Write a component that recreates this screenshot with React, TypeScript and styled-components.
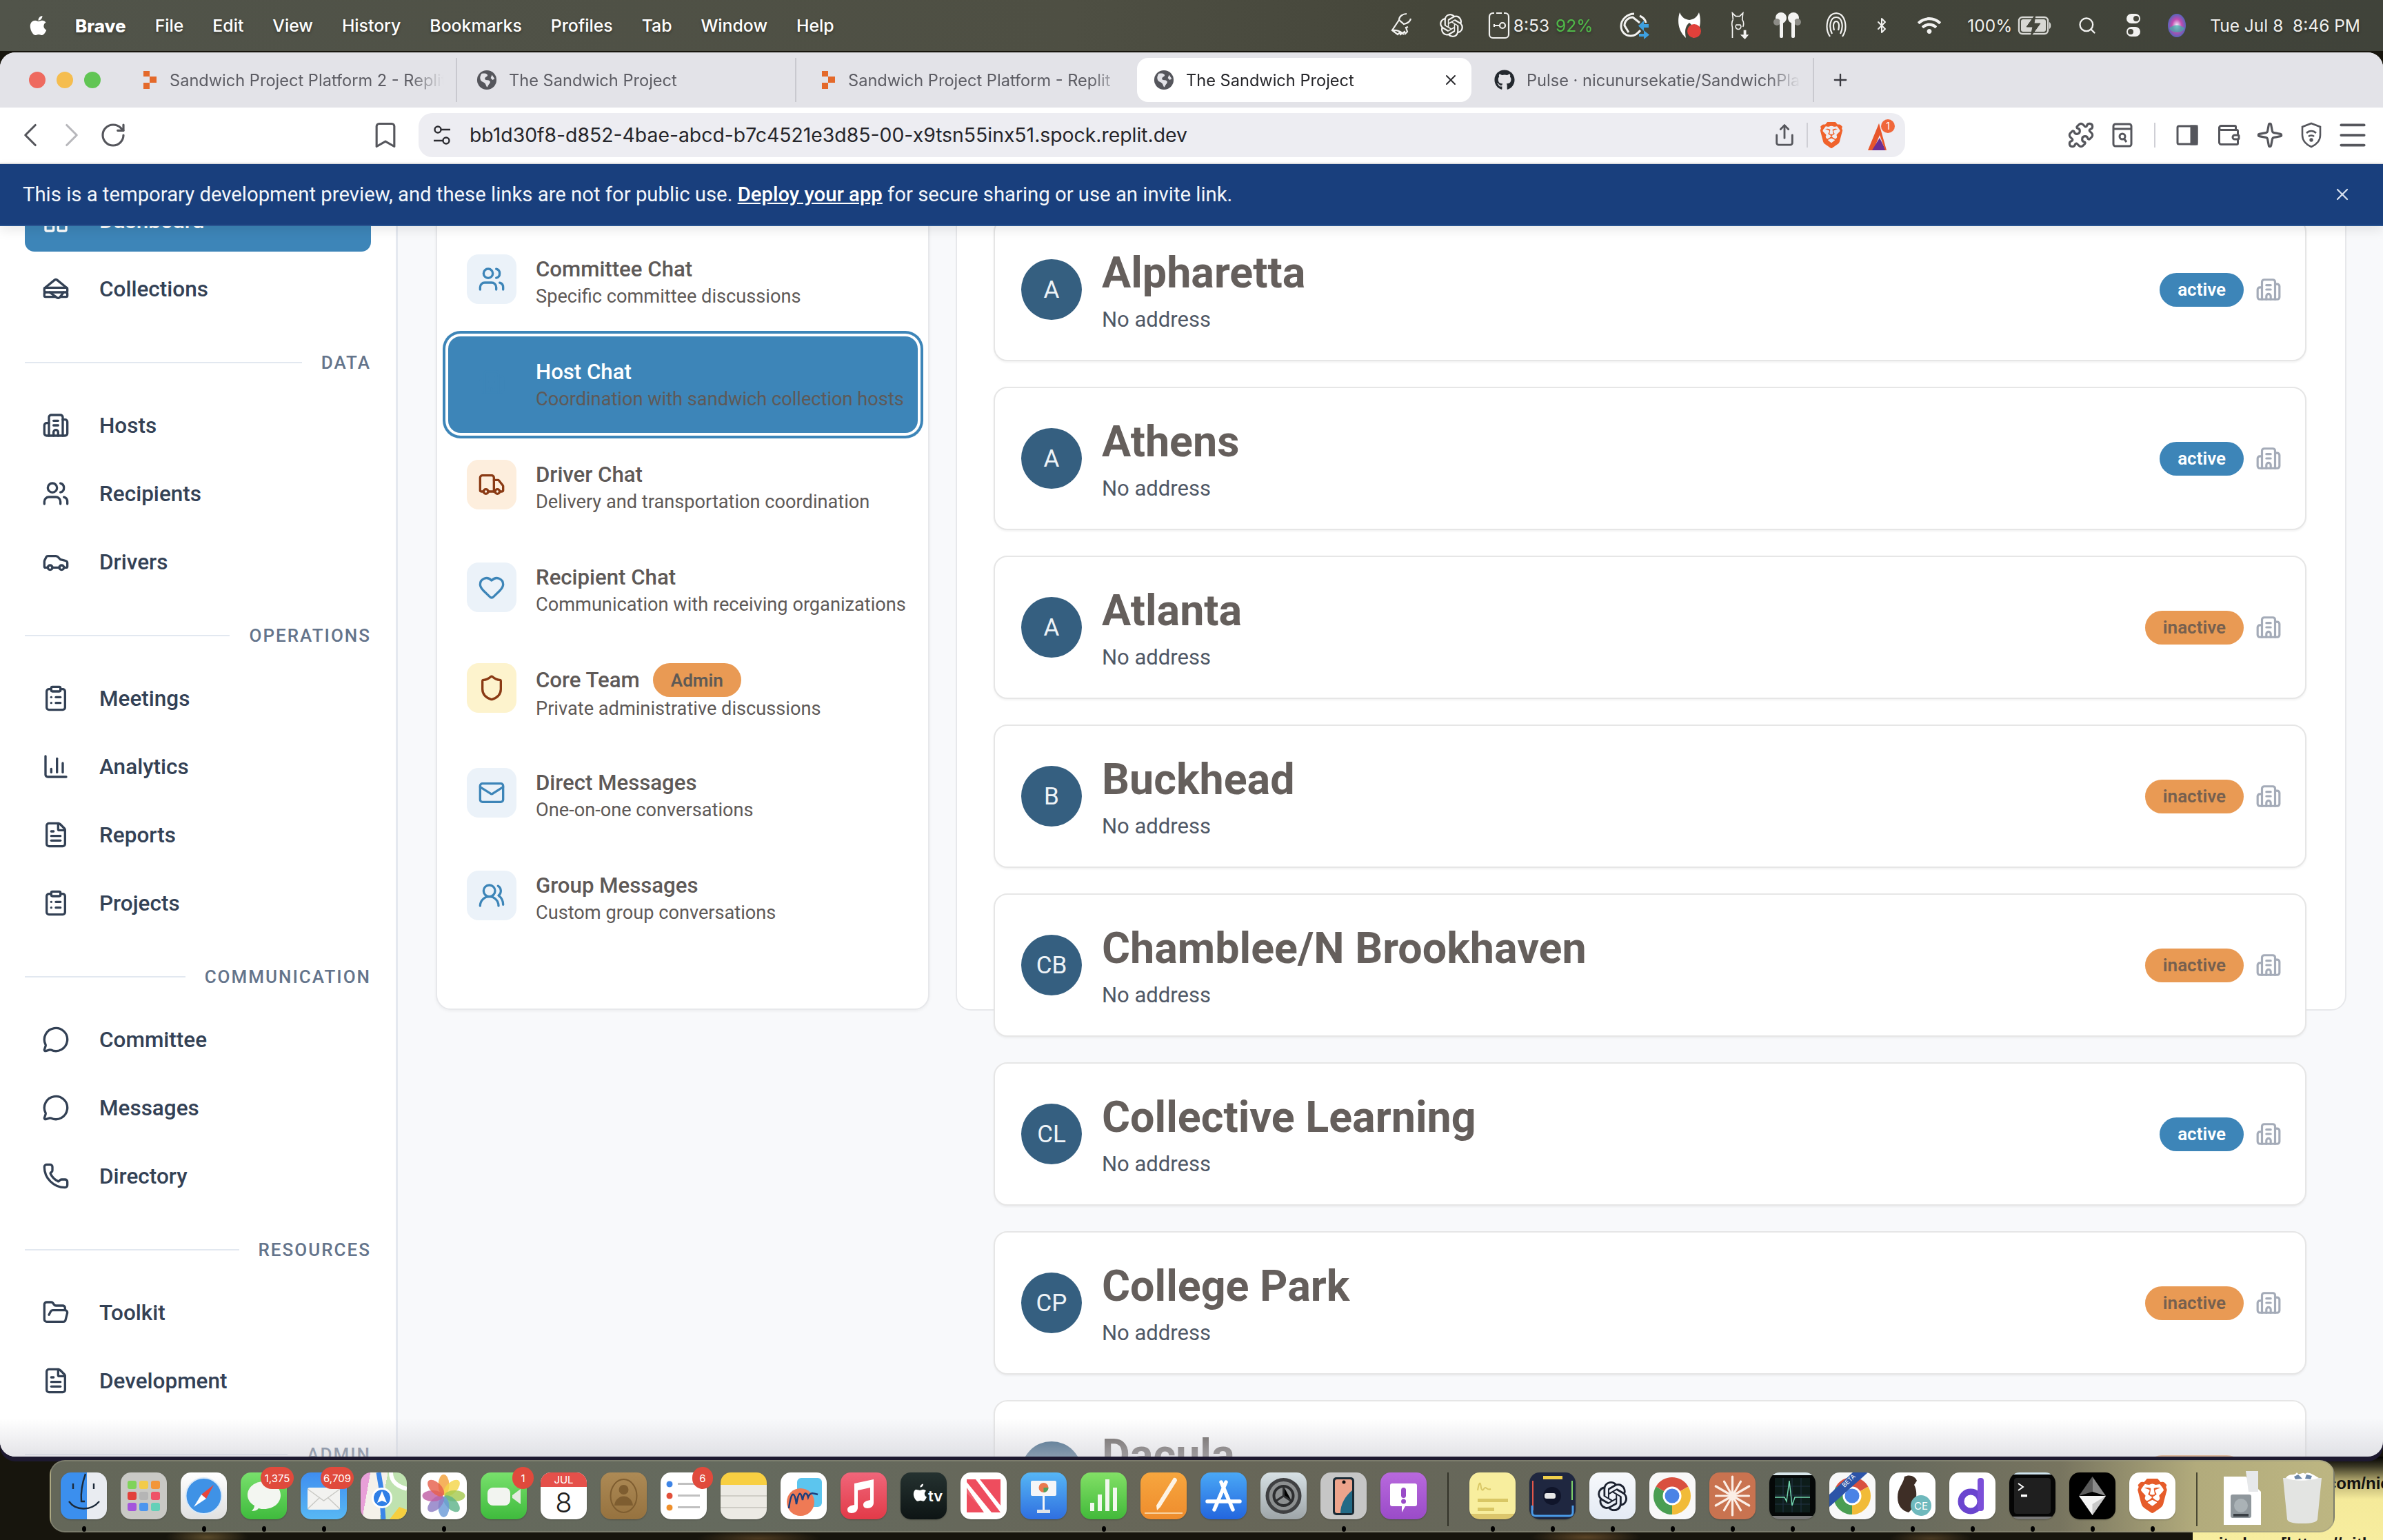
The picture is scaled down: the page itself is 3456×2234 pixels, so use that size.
import React from "react";
import styled, { createGlobalStyle } from "styled-components";
import {
  BarChart3, Bluetooth, Bookmark, Building2, Car, ChevronLeft, ChevronRight, ClipboardList,
  FileText, FolderOpen, Heart, LayoutDashboard, Mail, Menu, MessageCircle, Phone, Plus, Puzzle,
  RotateCw, Sandwich, Search, Share, Shield, Sparkle, Truck, Users, UsersRound, Wallet, X,
} from "lucide-react";
import { FaApple, FaGithub, FaWifi } from "react-icons/fa";
import { SiBrave, SiOpenai } from "react-icons/si";

const GlobalStyle = createGlobalStyle`
  html, body {
    margin: 0;
    width: 3456px;
    height: 2234px;
    overflow: hidden;
    background: #000;
    font-family: Roboto, "Liberation Sans", sans-serif;
  }
  * { box-sizing: border-box; }
`;

const Desktop = styled.div`
  position: relative;
  width: 3456px;
  height: 2234px;
  overflow: hidden;
  background:
    radial-gradient(60px 14px at 300px 2230px, #5a4a2a, transparent),
    radial-gradient(90px 12px at 1100px 2232px, #4d3a20, transparent),
    radial-gradient(80px 12px at 2300px 2230px, #5b4426, transparent),
    radial-gradient(60px 12px at 2800px 2232px, #4a3a22, transparent),
    #17150d;
`;

/* the note window that sits behind the dock at the lower right */
const NoteWindow = styled.div`
  position: absolute;
  left: 3180px;
  top: 2113px;
  right: 0;
  bottom: 0;
  overflow: hidden;
  background: linear-gradient(180deg, #000 0, #3a3724 14px, #b8ae72 36px, #f5ea9a 62px, #f7ed9f 100%);
  color: #111;
  font: 600 24px "Liberation Sans", sans-serif;
  white-space: nowrap;
`;

const NoteLine = styled.div<{ $top: number; $left: number }>`
  position: absolute;
  top: ${(p) => p.$top}px;
  left: ${(p) => p.$left}px;
`;

/* ---------- macOS menu bar ---------- */

const MenuBar = styled.div`
  height: 74px;
  display: flex;
  align-items: center;
  padding-left: 42px;
  background: linear-gradient(90deg, #51544a 0%, #4e4f43 45%, #45463a 60%, #40433a 100%);
  color: #fff;
  font: 500 24.8px Inter, sans-serif;
  text-shadow: 0 2px 4px rgba(0, 0, 0, 0.35);
`;

const AppleMark = styled.div`
  width: 27px;
  height: 32px;
  margin-right: 40px;
  display: flex;
  svg { width: 27px; height: 32px; }
`;

const MenuItems = styled.div`
  display: flex;
  gap: 42px;
`;

const MenuName = styled.span<{ $bold?: boolean }>`
  font-weight: ${(p) => (p.$bold ? 800 : 500)};
  font-size: ${(p) => (p.$bold ? 26 : 24.8)}px;
`;

const Tray = styled.div`
  margin-left: auto;
  display: flex;
  align-items: center;
  padding-right: 33px;
`;

const TrayIcon = styled.div<{ $w: number; $ml: number }>`
  width: ${(p) => p.$w}px;
  margin-left: ${(p) => p.$ml}px;
  height: 40px;
  display: flex;
  align-items: center;
  justify-content: center;
  color: #f2f2f0;
  svg { width: 100%; height: 100%; display: block; }
`;

const TrayText = styled.span<{ $ml: number }>`
  margin-left: ${(p) => p.$ml}px;
  font: 400 24.5px Inter, sans-serif;
  white-space: nowrap;
  color: #f0f0ee;
`;

const Green = styled.span`
  color: #50ba49;
  margin-left: 9px;
`;

/* ---------- browser window ---------- */

const BrowserWindow = styled.div`
  position: relative;
  z-index: 1;
  height: 2037px;
  margin-top: 2px;
  display: flex;
  flex-direction: column;
  overflow: hidden;
  border-radius: 22px;
  background: #f8f9fb;
  box-shadow: 0 7px 0 #1d1930;
`;

const TabStrip = styled.div`
  height: 80px;
  flex: none;
  display: flex;
  align-items: center;
  background: #e3e3e8;
  font: 400 23.6px Inter, sans-serif;
  color: #5d5d64;
`;

const Lights = styled.div`
  width: 171px;
  flex: none;
  display: flex;
  gap: 16px;
  padding-left: 42px;
`;

const Light = styled.span<{ $c: string }>`
  width: 24px;
  height: 24px;
  border-radius: 50%;
  background: ${(p) => p.$c};
`;

const Tab = styled.div<{ $w: number; $pad: number; $active?: boolean; $sep?: boolean }>`
  position: relative;
  width: ${(p) => p.$w}px;
  height: 64px;
  flex: none;
  display: flex;
  align-items: center;
  gap: 17px;
  padding: 0 18px 0 ${(p) => p.$pad}px;
  border-radius: ${(p) => (p.$active ? "16px" : "0")};
  background: ${(p) => (p.$active ? "#fff" : "transparent")};
  color: ${(p) => (p.$active ? "#26262a" : "#5d5d64")};
  ${(p) => (p.$sep ? "border-right: 2px solid #c9c9cf;" : "")}
  svg { flex: none; }
`;

const TabTitle = styled.span`
  flex: 1;
  min-width: 0;
  overflow: hidden;
  white-space: nowrap;
  -webkit-mask-image: linear-gradient(90deg, #000 88%, transparent);
  mask-image: linear-gradient(90deg, #000 88%, transparent);
`;

const NewTab = styled.div`
  margin-left: 24px;
  display: flex;
  color: #3a3a40;
`;

const Toolbar = styled.div`
  height: 82px;
  flex: none;
  display: flex;
  align-items: center;
  background: #fff;
  border-bottom: 2px solid #e4e4e6;
`;

const NavGroup = styled.div`
  width: 607px;
  flex: none;
  display: flex;
  align-items: center;
  gap: 24px;
  padding-left: 26px;
`;

const ToolSlot = styled.div<{ $c?: string; $push?: boolean }>`
  width: 36px;
  height: 36px;
  flex: none;
  display: flex;
  align-items: center;
  justify-content: center;
  color: ${(p) => p.$c || "#55565c"};
  ${(p) => (p.$push ? "margin-left: auto; margin-right: 30px;" : "")}
  svg { flex: none; }
`;

const UrlBar = styled.div`
  width: 2156px;
  height: 64px;
  flex: none;
  display: flex;
  align-items: center;
  padding: 0 15px 0 20px;
  border-radius: 20px;
  background: #ededf2;
  font: 400 28.35px Inter, sans-serif;
  color: #25252a;
`;

const UrlText = styled.span`
  margin-left: 26px;
`;

const UrlTools = styled.div`
  margin-left: auto;
  display: flex;
  align-items: center;
  gap: 15px;
`;

const ThinRule = styled.span<{ $h: number }>`
  width: 2px;
  height: ${(p) => p.$h}px;
  background: #cfcfd5;
`;

const AlertMark = styled.div`
  margin-left: 16px;
  display: flex;
`;

const ToolsRight = styled.div`
  flex: 1;
  display: flex;
  align-items: center;
  justify-content: flex-end;
  gap: 24px;
  padding-right: 26px;
`;

const ToolRule = styled(ThinRule)`
  margin: 0 4px;
`;

const Banner = styled.div`
  position: relative;
  z-index: 3;
  height: 90px;
  flex: none;
  display: flex;
  align-items: center;
  padding: 0 45px 0 33px;
  background: #193f7d;
  border-bottom: 2px solid #28538f;
  box-shadow: 0 6px 16px rgba(0, 0, 0, 0.09);
  color: #f4f7fb;
  font: 400 29.3px Roboto, sans-serif;
`;

const BannerLink = styled.a`
  color: #fff;
  font-weight: 500;
  text-decoration: underline;
`;

const BannerClose = styled.div`
  margin-left: auto;
  display: flex;
  color: #d5dfee;
`;

const Body = styled.div`
  position: relative;
  flex: 1;
  min-height: 0;
  display: flex;
  align-items: flex-start;
  overflow: hidden;
  &::after {
    content: "";
    position: absolute;
    z-index: 2;
    left: 0;
    right: 0;
    bottom: 0;
    height: 56px;
    background: linear-gradient(180deg, rgba(210, 210, 216, 0), rgba(205, 205, 212, 0.55));
  }
`;

/* ---------- sidebar ---------- */

const Sidebar = styled.nav`
  width: 577px;
  height: 100%;
  flex: none;
  display: flex;
  flex-direction: column;
  padding: 0 36px;
  background: #fff;
  border-right: 3px solid #e5e9f0;
`;

const NavRows = styled.div<{ $first?: boolean }>`
  display: flex;
  flex-direction: column;
  gap: 9px;
  flex: none;
  ${(p) => (p.$first ? "margin-top: -53px;" : "")}
`;

const NavRow = styled.div<{ $active?: boolean }>`
  height: 90px;
  flex: none;
  display: flex;
  align-items: center;
  gap: 43px;
  padding-left: 25px;
  border-radius: 14px;
  background: ${(p) => (p.$active ? "#3d85b8" : "transparent")};
  color: ${(p) => (p.$active ? "#fff" : "#334155")};
  font-size: 31.5px;
  font-weight: 500;
  svg { width: 40px; height: 40px; flex: none; }
`;

const SectionHead = styled.div`
  height: 30px;
  flex: none;
  margin: 47px 0 31px;
  display: flex;
  align-items: center;
  gap: 28px;
  font-size: 26px;
  font-weight: 500;
  letter-spacing: 2px;
  color: #64748b;
`;

const SectionRule = styled.span`
  flex: 1;
  height: 2px;
  background: #e2e8f0;
`;

/* ---------- chat list ---------- */

const ChatPanel = styled.section`
  width: 716px;
  height: 1177px;
  flex: none;
  margin: -40px 0 0 55px;
  padding: 47px 15px 0 16px;
  display: flex;
  flex-direction: column;
  gap: 9px;
  background: #fff;
  border: 2px solid #e7e8eb;
  border-radius: 22px;
  box-shadow: 0 2px 4px rgba(0, 0, 0, 0.05);
`;

const ChatRow = styled.div<{ $active?: boolean; $pad?: number }>`
  height: 140px;
  flex: none;
  display: flex;
  gap: 28px;
  padding: ${(p) => p.$pad ?? 32}px 0 0 27px;
  border-radius: 18px;
  ${(p) =>
    p.$active
      ? `background: #3d85b8;
         margin: 2px 0 -2px;
         box-shadow: 0 0 0 4px #fff, 0 0 0 8px #3d85b8;`
      : ""}
`;

const ChatIcon = styled.div<{ $bg: string; $fg: string }>`
  width: 72px;
  height: 72px;
  flex: none;
  display: flex;
  align-items: center;
  justify-content: center;
  border-radius: 17px;
  background: ${(p) => p.$bg};
  color: ${(p) => p.$fg};
  svg { width: 40px; height: 40px; }
`;

const ChatText = styled.div`
  min-width: 0;
  display: flex;
  flex-direction: column;
`;

const ChatTitle = styled.div<{ $active?: boolean }>`
  display: flex;
  align-items: center;
  gap: 19px;
  min-height: 44px;
  font-size: 31.2px;
  font-weight: 500;
  line-height: 44px;
  color: ${(p) => (p.$active ? "#fff" : "#5e5957")};
`;

const AdminPill = styled.span`
  width: 128px;
  height: 49px;
  display: flex;
  align-items: center;
  justify-content: center;
  border-radius: 25px;
  background: #e99a54;
  color: #5f5a55;
  font-size: 26px;
  font-weight: 600;
`;

const ChatDesc = styled.div`
  font-size: 27.2px;
  line-height: 34px;
  font-weight: 400;
  color: #5e5957;
  white-space: nowrap;
`;

/* ---------- hosts list ---------- */

const HostPanel = styled.section`
  width: 2017px;
  height: 1178px;
  flex: none;
  margin: -40px 0 0 38px;
  padding: 26px 0 0 53px;
  display: flex;
  flex-direction: column;
  gap: 37px;
  background: #fff;
  border: 2px solid #e7e8eb;
  border-radius: 22px;
`;

const HostCard = styled.article`
  width: 1904px;
  height: 208px;
  flex: none;
  display: flex;
  align-items: center;
  padding: 0 34px 0 38px;
  background: #fff;
  border: 2px solid #e6e6e6;
  border-radius: 20px;
  box-shadow: 0 2px 3px rgba(0, 0, 0, 0.05);
`;

const Avatar = styled.div`
  width: 88px;
  height: 88px;
  flex: none;
  display: flex;
  align-items: center;
  justify-content: center;
  border-radius: 50%;
  background: #355f80;
  color: #eef3f7;
  font-size: 35px;
`;

const HostInfo = styled.div`
  flex: 1;
  margin-left: 29px;
  padding-top: 4px;
`;

const HostName = styled.h3`
  margin: 0;
  font-size: 62.8px;
  line-height: 72px;
  font-weight: 700;
  color: #655f5c;
`;

const HostAddress = styled.p`
  margin: 12px 0 0;
  font-size: 31px;
  line-height: 40px;
  color: #4f5866;
`;

const StatusPill = styled.span<{ $active: boolean }>`
  height: 49px;
  padding: 0 26px;
  display: flex;
  align-items: center;
  border-radius: 25px;
  background: ${(p) => (p.$active ? "#3d85b8" : "#e99a54")};
  color: ${(p) => (p.$active ? "#fff" : "#76604f")};
  font-size: 26px;
  font-weight: 600;
`;

const CardIcon = styled.div`
  margin-left: 17px;
  display: flex;
  color: #a4abb8;
  svg { width: 38px; height: 38px; }
`;

/* ---------- dock ---------- */

const Dock = styled.div`
  position: relative;
  z-index: 2;
  width: 3314px;
  height: 105px;
  margin: 5px 0 0 72px;
  display: flex;
  align-items: flex-start;
  gap: 20px;
  padding: 16px 0 0 14px;
  border-radius: 22px;
  border: 2px solid rgba(150, 150, 130, 0.45);
  background: linear-gradient(90deg, #646759 0%, #656a5e 30%, #676658 50%, #66695d 80%, #77745f 88%, #b2ab7c 94%, #bdb682 100%);
`;

const DockItem = styled.div<{ $running?: boolean; $w?: number }>`
  position: relative;
  width: ${(p) => p.$w ?? 67}px;
  height: 68px;
  flex: none;
  svg { display: block; }
  ${(p) =>
    p.$running
      ? `&::after {
           content: "";
           position: absolute;
           left: 50%;
           top: 78px;
           width: 6px;
           height: 8px;
           margin-left: -3px;
           border-radius: 50%;
           background: #000;
         }`
      : ""}
`;

const Tile = styled.div<{ $bg: string }>`
  width: 100%;
  height: 100%;
  border-radius: 15px;
  overflow: hidden;
  background: ${(p) => p.$bg};
  box-shadow: 0 1px 2px rgba(0, 0, 0, 0.25);
`;

const DockBadge = styled.span<{ $w: number }>`
  position: absolute;
  top: -8px;
  right: -${(p) => (p.$w > 30 ? 10 : 9)}px;
  width: ${(p) => p.$w}px;
  height: 32px;
  display: flex;
  align-items: center;
  justify-content: center;
  border-radius: 16px;
  background: #e04a3c;
  color: #fff;
  font: 400 15px Inter, sans-serif;
`;

const DockRule = styled.span`
  width: 2px;
  height: 78px;
  flex: none;
  margin: 0 10px;
  background: rgba(30, 30, 20, 0.7);
`;

const ReplitMark = () => (
  <svg width="22" height="28" viewBox="0 0 22 28">
    <path fill="#e4692a" d="M1 1h9v8H1zM10 9h10v9H10zM1 18h9v9H1z" />
  </svg>
);

const GlobeMark = ({ size = 30 }: { size?: number }) => (
  <svg width={size} height={size} viewBox="0 0 32 32">
    <circle cx="16" cy="16" r="15" fill="#55565c" />
    <path fill="#e3e3e8" d="M8 6c4 0 7-1 9 2 1 3-4 3-4 6s6 1 8 4c1 3-3 5-4 9-2 0-2-4-4-6s-6-2-7-6c-1-3 0-6 2-9zM24 8l4 6-3 2-3-3z" />
  </svg>
);

const Sliders = () => (
  <svg width="28" height="32" viewBox="0 0 28 32" fill="none" stroke="#2b2b30" strokeWidth="2.4">
    <circle cx="8" cy="8" r="4.5" /><path d="M13 8h13M2 24h13" /><circle cx="20" cy="24" r="4.5" />
  </svg>
);

const TriangleMark = () => (
  <svg width="42" height="46" viewBox="0 0 42 46">
    <path fill="#e8562b" d="M19 6 3 45h8l9-22z" />
    <path fill="#6b2f93" d="M9 45 20 27l9 18z" />
    <path fill="#e8562b" d="M19 6l11 39h-2L19 20z" />
    <circle cx="32" cy="10" r="10" fill="#f0673a" />
    <text x="32" y="15" fontSize="14" fill="#fff" textAnchor="middle" fontFamily="Inter">1</text>
  </svg>
);

const ReaderMark = () => (
  <svg width="30" height="36" viewBox="0 0 30 36" fill="none" stroke="#55565c" strokeWidth="3">
    <rect x="2" y="2" width="26" height="32" rx="3" /><path d="M2 9h26" /><circle cx="15" cy="20" r="4" /><path d="m18 24 3 4" />
  </svg>
);

const SidePanelMark = () => (
  <svg width="32" height="32" viewBox="0 0 32 32" fill="none" stroke="#55565c" strokeWidth="3">
    <rect x="2" y="3" width="28" height="26" rx="2" /><path fill="#55565c" d="M22 3h8v26h-8z" />
  </svg>
);

const VpnMark = () => (
  <svg width="30" height="38" viewBox="0 0 30 38" fill="none" stroke="#55565c" strokeWidth="2.6">
    <path d="M15 2 28 7v12c0 8-6 14-13 17C8 33 2 27 2 19V7z" /><path d="M8 16c4-4 10-4 14 0M11 21c2-2 6-2 8 0" /><circle cx="15" cy="26" r="1.4" />
  </svg>
);

const BroomMark = () => (
  <svg viewBox="0 0 34 40" fill="none" stroke="currentColor" strokeWidth="2.2">
    <path d="M24 3c-6 0-11 4-11 9l7 6c5-1 9-3 10-8M13 12 3 27l8 6 3-3 1 3 6-4 1 3 3-3-2-6 3-1M3 27c7-1 12 1 17 6" />
  </svg>
);

const KeyMark = () => (
  <svg viewBox="0 0 32 40" fill="none" stroke="currentColor" strokeWidth="2.2">
    <path d="M9 2H7a5 5 0 0 0-5 5v26a5 5 0 0 0 5 5h18a5 5 0 0 0 5-5V7a5 5 0 0 0-5-5h-2M12 2h8" />
    <circle cx="21" cy="20" r="4" /><path d="M9 18v4M9 20h8" />
  </svg>
);

const CloudMark = () => (
  <svg viewBox="0 0 46 40" fill="none">
    <path stroke="#f2f2f0" strokeWidth="3" d="M22 3C12 3 3 11 3 21c0 9 7 14 14 14s10-4 14-8M14 30 8 20c0-7 6-12 12-12l10 8M30 6c5 2 8 6 9 10" />
    <path fill="#3ea0e0" d="M36 13v5h7v5h-7v5l-8-7.500zM36 27v5h-7v4h7v4l8-6.500z" />
  </svg>
);

const MalwareMark = () => (
  <svg viewBox="0 0 34 40">
    <path fill="#fff" d="M3 1C-1 14 1 28 12 38c-2-10-1-17 5-22 6 5 7 12 5 22C33 28 35 14 31 1c-3 7-7 10-14 11C10 11 6 8 3 1z" />
    <circle cx="24" cy="28" r="10" fill="#e0403a" />
  </svg>
);

const LlamaMark = () => (
  <svg viewBox="0 0 30 42" fill="none" stroke="currentColor" strokeWidth="1.8">
    <path d="M6 12 5 2l5 5h6l5-5-1 10c3 4 2 9 1 11M6 12c-3 4-2 8-1 12v16M11 20a4 4 0 1 0 6 0z" />
    <path strokeWidth="4" d="M24 28v9" /><path fill="currentColor" stroke="none" d="m17 35 7 7 6-7z" />
  </svg>
);

const PodsMark = () => (
  <svg viewBox="0 0 40 40">
    <circle cx="11" cy="9" r="8" fill="#f4f4f2" /><circle cx="29" cy="9" r="8" fill="#f4f4f2" />
    <circle cx="5" cy="15" r="5" fill="#8c8c86" /><circle cx="35" cy="15" r="5" fill="#8c8c86" />
    <rect x="9" y="12" width="5" height="26" rx="2" fill="#f4f4f2" /><rect x="26" y="12" width="5" height="26" rx="2" fill="#f4f4f2" />
  </svg>
);

const DropMark = () => (
  <svg viewBox="0 0 32 40" fill="none" stroke="currentColor" strokeWidth="2.2">
    <path d="M7 36C-1 24 2 3 16 2c14 1 17 22 9 34M10 32C5 22 7 8 16 8s11 14 6 24M13 27c-2-7-1-13 3-13s5 6 3 13" />
  </svg>
);

const BatteryMark = () => (
  <svg viewBox="0 0 50 40" fill="none">
    <rect x="2" y="8" width="42" height="24" rx="5" stroke="#d8d8d4" strokeWidth="2.4" />
    <rect x="5" y="11" width="36" height="18" rx="3" fill="#d8d8d4" />
    <path fill="#45463c" stroke="#45463c" d="M26 4 13 22h9l-3 14 14-19h-9z" />
    <path fill="#d8d8d4" d="M46 15c3 1 3 9 0 10z" />
  </svg>
);

const SwitchMark = () => (
  <svg viewBox="0 0 22 40">
    <rect x="1" y="3" width="20" height="14" rx="7" fill="#f2f2f0" /><circle cx="15" cy="10" r="4" fill="#45463c" />
    <rect x="1" y="22" width="20" height="14" rx="7" fill="#f2f2f0" /><circle cx="7" cy="29" r="4" fill="#45463c" />
  </svg>
);

const SiriMark = () => (
  <svg viewBox="0 0 28 40">
    <defs>
      <radialGradient id="siri" cx="50%" cy="50%" r="60%">
        <stop offset="0" stopColor="#f3f3ff" /><stop offset=".45" stopColor="#c04bb0" /><stop offset="1" stopColor="#2b6fbf" />
      </radialGradient>
    </defs>
    <ellipse cx="14" cy="20" rx="13" ry="17" fill="url(#siri)" />
    <path d="M3 24c6-6 16-6 22 0-4 8-17 8-22 0z" fill="#3bb3a9" opacity=".7" />
  </svg>
);

const stdIcon = (children: React.ReactNode) => (
  <svg width="100%" height="100%" viewBox="0 0 67 68">{children}</svg>
);

const chromeWheel = (
  <>
    <path fill="#d9503f" d="M33 34 9.600 20.500A27 27 0 0 1 56.400 20.500Z" />
    <path fill="#f1bb38" d="M33 34 56.400 20.500A27 27 0 0 1 33 61Z" />
    <path fill="#4a9e52" d="M33 34 33 61A27 27 0 0 1 9.600 20.500Z" />
    <circle cx="33" cy="34" r="13.500" fill="#fff" /><circle cx="33" cy="34" r="10.500" fill="#4a83e6" />
  </>
);

const petals = ["#f3a13a", "#f4d64a", "#a5c94f", "#5fb38a", "#6b9bd8", "#8c7cc4", "#c05fa5", "#e6604c"];

type DockApp = {
  key: string;
  bg: string;
  art?: React.ReactNode;
  badge?: string;
  badgeW?: number;
  running?: boolean;
  w?: number;
};

const dockLeft: DockApp[] = [
  { key: "finder", bg: "linear-gradient(90deg,#3b8fee 0 56%,#e9ecf1 56%)", running: true, art: stdIcon(
    <g fill="none" stroke="#1c2a3a" strokeWidth="2.4">
      <path d="M36 2c-5 14-7 28-6 40h5" /><path d="M18 16v8M48 16v8" /><path d="M12 42c10 14 32 14 44 0" />
    </g>) },
  { key: "launchpad", bg: "#c9c9c5", art: stdIcon(
    <>
      {["#7fd35a", "#f2cb4a", "#f2963a", "#e2403a", "#b5b5b5", "#ee5268", "#a455dc", "#4d96ee", "#64d0b8"].map((c, i) => (
        <rect key={c} x={10 + (i % 3) * 17} y={12 + Math.floor(i / 3) * 16} width="13" height="12" rx="3" fill={c} />
      ))}
    </>) },
  { key: "safari", bg: "linear-gradient(#fff,#e0e0e0)", running: true, art: stdIcon(
    <>
      <circle cx="33.500" cy="34" r="26" fill="#3f92e6" stroke="#d8e8f8" strokeWidth="2" />
      <path fill="#e9463c" d="M48 18 37 38l-7-6z" /><path fill="#fff" d="M19 50l11-18 7 6z" />
    </>) },
  { key: "messages", bg: "linear-gradient(#78e06c,#3fbb3d)", running: true, badge: "1,375", badgeW: 48, art: stdIcon(
    <path fill="#f3f6f1" d="M34 13c14 0 24 9 24 20s-10 20-24 20c-3 0-5 0-8-1-2 3-6 4-10 4 2-2 4-5 4-8-6-3-10-9-10-15 0-11 10-20 24-20z" />) },
  { key: "mail", bg: "linear-gradient(#3f8ef0 0,#58b8f4 100%)", running: true, badge: "6,709", badgeW: 48, art: stdIcon(
    <>
      <rect x="10" y="22" width="47" height="32" rx="3" fill="#f2f2f0" />
      <path fill="none" stroke="#c9c9c5" strokeWidth="1.500" d="m10 24 23.500 17L57 24M10 53l17-16M57 53 40 37" />
    </>) },
  { key: "maps", bg: "linear-gradient(100deg,#e8a0d8 0 18%,#f4f1ea 18% 50%,#bfe2b0 50%)", art: stdIcon(
    <>
      <path stroke="#3a86e8" strokeWidth="7" d="M26 0 31 30M31 40l2 28" fill="none" />
      <path fill="none" stroke="#fff" strokeWidth="6" d="M44 0c0 14 10 20 23 24" />
      <path fill="#f6cf3f" d="M42 68l14-18 11 4v14z" />
      <circle cx="31" cy="37" r="15" fill="#fff" /><circle cx="31" cy="37" r="12" fill="#2f7fe6" />
      <path fill="#fff" d="m31 27 7 17-7-3-7 3z" />
    </>) },
  { key: "photos", bg: "#fff", running: true, art: stdIcon(
    <>
      {petals.map((c, i) => (
        <ellipse key={c} cx="33.500" cy="18" rx="8" ry="15" fill={c} opacity=".82" transform={`rotate(${i * 45} 33.500 34)`} />
      ))}
    </>) },
  { key: "facetime", bg: "linear-gradient(#78e06c,#3fbb3d)", badge: "1", badgeW: 31, art: stdIcon(
    <>
      <rect x="10" y="22" width="33" height="26" rx="8" fill="#f2f4f0" /><path fill="#e4eae0" d="M46 33l12-9v22l-12-9z" />
    </>) },
  { key: "calendar", bg: "#fff", art: stdIcon(
    <>
      <rect width="67" height="21" fill="#e5504a" />
      <text x="33.500" y="16" textAnchor="middle" fontSize="15" fill="#fff" fontFamily="Inter">JUL</text>
      <text x="33.500" y="58" textAnchor="middle" fontSize="40" fill="#1e1e1e" fontFamily="Inter" fontWeight="300">8</text>
    </>) },
  { key: "contacts", bg: "linear-gradient(#ad8a55,#96723f)", art: stdIcon(
    <>
      <ellipse cx="33.500" cy="34" rx="19" ry="24" fill="none" stroke="#7e5d30" strokeWidth="2" />
      <circle cx="33.500" cy="25" r="7" fill="#7e5d30" /><path fill="#7e5d30" d="M20 48c2-18 25-18 27 0z" />
    </>) },
  { key: "reminders", bg: "#fff", badge: "6", badgeW: 30, art: stdIcon(
    <>
      {["#3d84e6", "#e2503a", "#ef8f2a"].map((c, i) => (
        <g key={c}>
          <circle cx="13" cy={17 + i * 17} r="5" fill={c} stroke="#fff" strokeWidth="1" />
          <rect x="25" y={15 + i * 17} width="32" height="3" fill="#c0c0c0" />
        </g>
      ))}
    </>) },
  { key: "notes", bg: "linear-gradient(#f8cf42 0 26%,#eceae4 26%)", art: stdIcon(
    <path stroke="#cfcdc6" strokeWidth="2" d="M0 34h67M0 51h67" />) },
  { key: "freeform", bg: "#fff", art: stdIcon(
    <>
      <rect x="24" y="8" width="36" height="42" rx="6" fill="#5cc5ee" /><circle cx="29" cy="43" r="20" fill="#ef7a55" />
      <path fill="none" stroke="#1d3f7c" strokeWidth="2.500" d="M12 52c4-30 9-22 11-6 3-18 6-20 9-6 2-12 6-12 8-4 3-8 8-6 14-4" />
    </>) },
  { key: "music", bg: "linear-gradient(#f0667a,#e23a48)", art: stdIcon(
    <path fill="#fff" d="M48 10v34c0 5-4 8-9 8s-6-3-6-5c0-4 4-6 10-7V22l-18 4v25c0 5-4 8-9 8s-6-3-6-5c0-4 4-6 10-7V16z" />) },
  { key: "tv", bg: "linear-gradient(#253230,#0d1414)", art: (
    <svg width="100%" height="100%" viewBox="0 0 67 68">
      <path fill="#fff" d="M23 25c2-.2 4 1 5 1s3-1.500 5-1.300c1.500 0 3 .8 4 2-3 2-3 7 1 9-1 2-3 6-5 6-1.500 0-2-1-4-1s-2.500 1-4 1c-3-.2-7-7-6-12 .5-3 2-5 4-5zM29 19c1-1.500 2.500-2.500 4-2.500 0 3-2 5-4.500 5 0-1 0-1.700.5-2.500z" />
      <text x="40" y="42" fontSize="22" fill="#fff" fontFamily="Inter" fontWeight="600">tv</text>
    </svg>) },
  { key: "news", bg: "#fff", art: stdIcon(
    <>
      <path fill="#ee4d5e" d="M9 10h13l36 48H45L9 14z" /><path fill="#ee4d5e" d="M28 10h30v38zM9 22l25 36H9z" />
      <path fill="#fff" d="M9 20 45 58h-9L9 30z" opacity=".15" />
    </>) },
  { key: "keynote", bg: "linear-gradient(#56b6f5,#2f6fe0)", art: stdIcon(
    <>
      <rect x="15" y="12" width="37" height="22" rx="2" fill="#f4f6f8" /><circle cx="33.500" cy="22" r="7" fill="#ea7a50" />
      <path fill="#4ea35d" d="M33.500 22h7a7 7 0 0 1-7 7z" />
      <rect x="32" y="34" width="3" height="22" fill="#f4f6f8" /><rect x="24" y="54" width="19" height="5" fill="#dfe3e8" />
    </>) },
  { key: "numbers", bg: "linear-gradient(#82e066,#42b93a)", running: true, art: stdIcon(
    <>
      {[[14, 44, 12], [25, 32, 24], [36, 10, 46], [47, 22, 34]].map(([x, y, h]) => (
        <rect key={x} x={x} y={y} width="6" height={h} fill="#f2f8ee" />
      ))}
    </>) },
  { key: "pages", bg: "linear-gradient(#f7a63e,#ee8c2d)", art: stdIcon(
    <>
      <path fill="#fdf3e4" d="M48 8c3-1 5 1 5 4L29 50l-5 5-1-7z" /><rect x="6" y="58" width="55" height="2" fill="#f9d3a2" />
    </>) },
  { key: "appstore", bg: "linear-gradient(#4aa8f6,#2366de)", art: stdIcon(
    <g stroke="#fff" strokeWidth="5.500" strokeLinecap="round" fill="none">
      <path d="M20 54 37 14M47 54 30 14M10 42h47" />
    </g>) },
  { key: "settings", bg: "linear-gradient(#d6e0e4,#9ea5a8)", art: stdIcon(
    <>
      <circle cx="33.500" cy="34" r="26" fill="#3f4042" /><circle cx="33.500" cy="34" r="21" fill="#8c8f90" />
      <circle cx="33.500" cy="34" r="14" fill="none" stroke="#2d2e30" strokeWidth="4" />
      <path stroke="#2d2e30" strokeWidth="3" d="M33.500 20v14l12 8M33.500 34l-12 8" />
    </>) },
  { key: "mirror", bg: "#c6c6c6", running: true, art: stdIcon(
    <>
      <rect x="18" y="7" width="31" height="55" rx="5" fill="#1a2a35" /><rect x="21" y="10" width="25" height="49" rx="3" fill="#eda48c" />
      <path fill="#236a86" d="M46 26C36 34 29 46 29 59h17z" /><circle cx="34" cy="14" r="2.500" fill="#111" />
    </>) },
  { key: "feedback", bg: "linear-gradient(#b869dd,#9a4bc8)", art: (
    <svg width="100%" height="100%" viewBox="0 0 67 68">
      <path fill="#fff" d="M17 16h33a3 3 0 0 1 3 3v27a3 3 0 0 1-3 3H36l-5 9v-9H17a3 3 0 0 1-3-3V19a3 3 0 0 1 3-3z" />
      <rect x="30" y="22" width="7" height="15" rx="3.500" fill="#9a4bc8" /><circle cx="33.500" cy="42" r="3.500" fill="#9a4bc8" />
    </svg>) },
];

const dockRight: DockApp[] = [
  { key: "stickies", bg: "linear-gradient(#f8ee9e 0 88%,#dcc66c 88%)", running: true, art: stdIcon(
    <g fill="#d9c765">
      <path fill="none" stroke="#d9c765" strokeWidth="2" d="M12 26c2-12 4-14 5-4 2 8 4 0 6 0s3 4 8 2" />
      <rect x="12" y="38" width="44" height="5" /><rect x="12" y="51" width="24" height="5" />
    </g>) },
  { key: "blackbox", bg: "#1f2740", running: true, art: stdIcon(
    <>
      <rect x="20" y="5" width="28" height="5" fill="#f0cf4c" />
      <path fill="none" stroke="#e2574a" strokeWidth="2" d="M5 55V12" /><path fill="none" stroke="#7fd36a" strokeWidth="2" d="M62 40V12" />
      <path fill="none" stroke="#4a9be8" strokeWidth="3" d="M4 48v10c0 3 2 5 5 5h49c3 0 5-2 5-5V48" />
      <circle cx="33" cy="34" r="13" fill="#10152a" /><rect x="22" y="30" width="16" height="8" rx="3" fill="#e6e6e6" />
    </>) },
  { key: "chatgpt", bg: "linear-gradient(#f7f9fc,#e4eaf4)", running: true, art: (
    <svg width="100%" height="100%" viewBox="0 0 67 68"><g transform="translate(12 13) scale(1.800)"><SiOpenai size={24} color="#1c2230" /></g></svg>) },
  { key: "chrome", bg: "#f8f8f8", running: true, art: stdIcon(chromeWheel) },
  { key: "claude", bg: "#c97350", running: true, art: stdIcon(
    <g stroke="#fbeee6" strokeWidth="3.200" strokeLinecap="round">
      {Array.from({ length: 12 }, (_, i) => (
        <line key={i} x1="33.500" y1="34" x2="33.500" y2={i % 2 ? 10 : 6} transform={`rotate(${i * 30} 33.500 34)`} />
      ))}
    </g>) },
  { key: "activity", bg: "linear-gradient(#d8e6ea 0 6%,#050808 6% 92%,#777 92%)", running: true, art: stdIcon(
    <>
      <rect x="8" y="8" width="51" height="50" fill="#0d1c1a" />
      <path stroke="#234" strokeWidth="1" d="M8 20h51M8 33h51M8 46h51M20 8v50M33 8v50M46 8v50" />
      <path fill="none" stroke="#74d8b0" strokeWidth="1.500" d="M8 36h14l3 6 4-30 4 36 4-12h22" />
    </>) },
  { key: "chromebeta", bg: "#f8f8f8", running: true, art: stdIcon(
    <>
      {chromeWheel}
      <path fill="#2c54a8" d="M0 32 34 0h22L0 50z" />
      <text x="0" y="0" fontSize="9" fill="#fff" fontFamily="Inter" transform="translate(22 22) rotate(-43)">BETA</text>
    </>) },
  { key: "beaver", bg: "#fff", running: true, art: stdIcon(
    <>
      <path fill="#3e2e26" d="M22 6c8-4 16 0 18 6l-4 6c6 10 4 30-8 40-8-2-16-8-16-22 0-14 8-18 10-30z" />
      <circle cx="46" cy="48" r="15" fill="#6fb9bd" />
      <text x="46" y="54" textAnchor="middle" fontSize="15" fill="#fff" fontFamily="Inter">CE</text>
    </>) },
  { key: "d", bg: "#fff", running: true, art: stdIcon(
    <>
      <circle cx="31" cy="42" r="14" fill="none" stroke="#6a45cf" strokeWidth="9" />
      <rect x="41" y="8" width="9" height="48" rx="4" fill="#7b4fd8" />
    </>) },
  { key: "terminal", bg: "linear-gradient(#cfe4ee 0 5%,#050505 5% 94%,#777 94%)", running: true, art: (
    <svg width="100%" height="100%" viewBox="0 0 67 68">
      <rect x="7" y="8" width="53" height="52" rx="4" fill="#1f1f1f" />
      <path fill="none" stroke="#fff" strokeWidth="2" d="m13 16 7 5-7 5" /><rect x="17" y="32" width="9" height="3.500" fill="#fff" />
    </svg>) },
  { key: "crystal", bg: "#000", running: true, art: stdIcon(
    <>
      <path fill="#5a5a5a" d="M33.500 6 14 34l19.500-6z" /><path fill="#8a8a8a" d="m33.500 6 19.500 28-19.500-6z" />
      <path fill="#f4f4f4" d="M14 34h39L33.500 62z" /><path fill="#c8c8c8" d="M33.500 46 53 34 33.500 62z" />
    </>) },
  { key: "bravedock", bg: "#fff", running: true, art: (
    <svg width="100%" height="100%" viewBox="0 0 67 68"><g transform="translate(8.500 9) scale(2.080)"><SiBrave size={24} color="#e65c2a" /></g></svg>) },
];

const DockTile = ({ app }: { app: DockApp }) => (
  <DockItem $running={app.running}>
    <Tile $bg={app.bg}>{app.art}</Tile>
    {app.badge && <DockBadge $w={app.badgeW || 30}>{app.badge}</DockBadge>}
  </DockItem>
);

const DownloadsStack = styled(DockItem)`
  height: 78px;
  margin-top: -2px;
  margin-left: 8px;
`;

const TrashCan = styled(DockItem)`
  height: 78px;
  margin-top: -4px;
  margin-left: 10px;
`;

type NavEntry = { label: string; icon: React.ReactNode; active?: boolean };
type NavGroupData = { title?: string; rows: NavEntry[] };

const navGroups: NavGroupData[] = [
  { rows: [
    { label: "Dashboard", icon: <LayoutDashboard />, active: true },
    { label: "Collections", icon: <Sandwich /> },
  ] },
  { title: "DATA", rows: [
    { label: "Hosts", icon: <Building2 /> },
    { label: "Recipients", icon: <Users /> },
    { label: "Drivers", icon: <Car /> },
  ] },
  { title: "OPERATIONS", rows: [
    { label: "Meetings", icon: <ClipboardList /> },
    { label: "Analytics", icon: <BarChart3 /> },
    { label: "Reports", icon: <FileText /> },
    { label: "Projects", icon: <ClipboardList /> },
  ] },
  { title: "COMMUNICATION", rows: [
    { label: "Committee", icon: <MessageCircle /> },
    { label: "Messages", icon: <MessageCircle /> },
    { label: "Directory", icon: <Phone /> },
  ] },
  { title: "RESOURCES", rows: [
    { label: "Toolkit", icon: <FolderOpen /> },
    { label: "Development", icon: <FileText /> },
  ] },
  { title: "ADMIN", rows: [] },
];

const BLUE_BG = "#ebf2f9";
const BLUE = "#3d85b8";
const BROWN = "#8a3a14";

const chats = [
  { title: "Committee Chat", desc: "Specific committee discussions", bg: BLUE_BG, fg: BLUE, icon: <Users /> },
  { title: "Host Chat", desc: "Coordination with sandwich collection hosts", bg: "transparent", fg: BLUE, icon: <Building2 />, active: true, pad: 30 },
  { title: "Driver Chat", desc: "Delivery and transportation coordination", bg: "#fdeedd", fg: BROWN, icon: <Truck /> },
  { title: "Recipient Chat", desc: "Communication with receiving organizations", bg: BLUE_BG, fg: BLUE, icon: <Heart /> },
  { title: "Core Team", desc: "Private administrative discussions", bg: "#fdf3cd", fg: BROWN, icon: <Shield />, admin: true, pad: 29 },
  { title: "Direct Messages", desc: "One-on-one conversations", bg: BLUE_BG, fg: BLUE, icon: <Mail /> },
  { title: "Group Messages", desc: "Custom group conversations", bg: BLUE_BG, fg: BLUE, icon: <UsersRound /> },
];

const hosts = [
  { initials: "A", name: "Alpharetta", active: true },
  { initials: "A", name: "Athens", active: true },
  { initials: "A", name: "Atlanta", active: false },
  { initials: "B", name: "Buckhead", active: false },
  { initials: "CB", name: "Chamblee/N Brookhaven", active: false },
  { initials: "CL", name: "Collective Learning", active: true },
  { initials: "CP", name: "College Park", active: false },
  { initials: "D", name: "Dacula", active: false },
];

const menuNames = ["File", "Edit", "View", "History", "Bookmarks", "Profiles", "Tab", "Window", "Help"];

export default function App() {
  return (
    <Desktop>
      <GlobalStyle />
      <NoteWindow>
        <NoteLine $top={25} $left={115}>github.com/nicunursekatie</NoteLine>
        <NoteLine $top={113} $left={23}>git clone [https://github.com</NoteLine>
      </NoteWindow>

      <MenuBar>
        <AppleMark><FaApple /></AppleMark>
        <MenuItems>
          <MenuName $bold>Brave</MenuName>
          {menuNames.map((m) => <MenuName key={m}>{m}</MenuName>)}
        </MenuItems>
        <Tray>
          <TrayIcon $w={34} $ml={0}><BroomMark /></TrayIcon>
          <TrayIcon $w={34} $ml={38}><SiOpenai /></TrayIcon>
          <TrayIcon $w={32} $ml={36}><KeyMark /></TrayIcon>
          <TrayText $ml={5}>8:53<Green>92%</Green></TrayText>
          <TrayIcon $w={46} $ml={38}><CloudMark /></TrayIcon>
          <TrayIcon $w={34} $ml={39}><MalwareMark /></TrayIcon>
          <TrayIcon $w={30} $ml={40}><LlamaMark /></TrayIcon>
          <TrayIcon $w={40} $ml={35}><PodsMark /></TrayIcon>
          <TrayIcon $w={32} $ml={35}><DropMark /></TrayIcon>
          <TrayIcon $w={24} $ml={38}><Bluetooth /></TrayIcon>
          <TrayIcon $w={34} $ml={40}><FaWifi /></TrayIcon>
          <TrayText $ml={38}>100%</TrayText>
          <TrayIcon $w={50} $ml={8}><BatteryMark /></TrayIcon>
          <TrayIcon $w={28} $ml={37}><Search /></TrayIcon>
          <TrayIcon $w={22} $ml={42}><SwitchMark /></TrayIcon>
          <TrayIcon $w={28} $ml={38}><SiriMark /></TrayIcon>
          <TrayText $ml={34}>Tue Jul 8&nbsp;&nbsp;8:46 PM</TrayText>
        </Tray>
      </MenuBar>

      <BrowserWindow>
        <TabStrip>
          <Lights>
            <Light $c="#ee6a5f" /><Light $c="#f5bd4f" /><Light $c="#61c554" />
          </Lights>
          <Tab $w={492} $pad={36} $sep><ReplitMark /><TabTitle>Sandwich Project Platform 2 - Replit</TabTitle></Tab>
          <Tab $w={492} $pad={28} $sep><GlobeMark /><TabTitle>The Sandwich Project</TabTitle></Tab>
          <Tab $w={494} $pad={36}><ReplitMark /><TabTitle>Sandwich Project Platform - Replit</TabTitle></Tab>
          <Tab $w={485} $pad={24} $active>
            <GlobeMark />
            <TabTitle>The Sandwich Project</TabTitle>
            <X size={24} color="#2a2a2e" />
          </Tab>
          <Tab $w={497} $pad={33} $sep><FaGithub size={30} color="#24292f" /><TabTitle>Pulse · nicunursekatie/SandwichPlatform</TabTitle></Tab>
          <NewTab><Plus size={28} /></NewTab>
        </TabStrip>

        <Toolbar>
          <NavGroup>
            <ToolSlot><ChevronLeft size={58} strokeWidth={1.3} /></ToolSlot>
            <ToolSlot $c="#b8b8bc"><ChevronRight size={58} strokeWidth={1.3} /></ToolSlot>
            <ToolSlot><RotateCw size={40} strokeWidth={1.9} /></ToolSlot>
            <ToolSlot $push><Bookmark size={44} strokeWidth={1.7} /></ToolSlot>
          </NavGroup>
          <UrlBar>
            <Sliders />
            <UrlText>bb1d30f8-d852-4bae-abcd-b7c4521e3d85-00-x9tsn55inx51.spock.replit.dev</UrlText>
            <UrlTools>
              <Share size={34} color="#55565c" strokeWidth={2} />
              <ThinRule $h={36} />
              <SiBrave size={38} color="#f0622b" />
              <AlertMark><TriangleMark /></AlertMark>
            </UrlTools>
          </UrlBar>
          <ToolsRight>
            <ToolSlot><Puzzle size={40} strokeWidth={1.9} /></ToolSlot>
            <ToolSlot><ReaderMark /></ToolSlot>
            <ToolRule $h={36} />
            <ToolSlot><SidePanelMark /></ToolSlot>
            <ToolSlot><Wallet size={36} strokeWidth={2} /></ToolSlot>
            <ToolSlot><Sparkle size={40} strokeWidth={1.9} /></ToolSlot>
            <ToolSlot><VpnMark /></ToolSlot>
            <ToolSlot><Menu size={50} strokeWidth={1.8} /></ToolSlot>
          </ToolsRight>
        </Toolbar>

        <Banner>
          <span>
            This is a temporary development preview, and these links are not for public use.{" "}
            <BannerLink>Deploy your app</BannerLink> for secure sharing or use an invite link.
          </span>
          <BannerClose><X size={28} /></BannerClose>
        </Banner>

        <Body>
          <Sidebar>
            {navGroups.map((group, i) => (
              <React.Fragment key={group.title || "top"}>
                {group.title && (
                  <SectionHead><SectionRule />{group.title}</SectionHead>
                )}
                <NavRows $first={i === 0}>
                  {group.rows.map((row) => (
                    <NavRow key={row.label} $active={row.active}>{row.icon}{row.label}</NavRow>
                  ))}
                </NavRows>
              </React.Fragment>
            ))}
          </Sidebar>

          <ChatPanel>
            {chats.map((chat) => (
              <ChatRow key={chat.title} $active={chat.active} $pad={chat.pad}>
                <ChatIcon $bg={chat.bg} $fg={chat.fg}>{chat.icon}</ChatIcon>
                <ChatText>
                  <ChatTitle $active={chat.active}>
                    {chat.title}
                    {chat.admin && <AdminPill>Admin</AdminPill>}
                  </ChatTitle>
                  <ChatDesc>{chat.desc}</ChatDesc>
                </ChatText>
              </ChatRow>
            ))}
          </ChatPanel>

          <HostPanel>
            {hosts.map((host) => (
              <HostCard key={host.name}>
                <Avatar>{host.initials}</Avatar>
                <HostInfo>
                  <HostName>{host.name}</HostName>
                  <HostAddress>No address</HostAddress>
                </HostInfo>
                <StatusPill $active={host.active}>{host.active ? "active" : "inactive"}</StatusPill>
                <CardIcon><Building2 /></CardIcon>
              </HostCard>
            ))}
          </HostPanel>
        </Body>
      </BrowserWindow>

      <Dock>
        {dockLeft.map((app) => <DockTile key={app.key} app={app} />)}
        <DockRule />
        {dockRight.map((app) => <DockTile key={app.key} app={app} />)}
        <DockRule />
        <DownloadsStack $w={54}>
          <svg width="54" height="78" viewBox="0 0 54 78">
            <path fill="#fff" d="M0 8h32l22 22v48H0z" />
            <path fill="#e6e8ea" d="M32 0h18v30H36z" />
            <rect x="10" y="34" width="30" height="34" rx="3" fill="#8f979c" />
            <circle cx="25" cy="50" r="10" fill="#aab2b6" />
            <rect x="14" y="62" width="22" height="4" fill="#3a3f44" />
          </svg>
        </DownloadsStack>
        <TrashCan $w={60}>
          <svg width="60" height="78" viewBox="0 0 60 78">
            <path fill="#e3e4e2" d="M2 12h56l-6 60c-1 4-8 6-22 6S9 76 8 72z" />
            <path fill="#fff" d="M6 12c6-8 12-2 16-8 4 6 8-2 12 2 4-4 10 0 20 6-16 5-36 5-48 0z" />
            <path fill="#6d87a8" d="M18 10l6-3 6 6-10 1zM36 7l8 2-2 5-8-1z" />
          </svg>
        </TrashCan>
      </Dock>
    </Desktop>
  );
}
